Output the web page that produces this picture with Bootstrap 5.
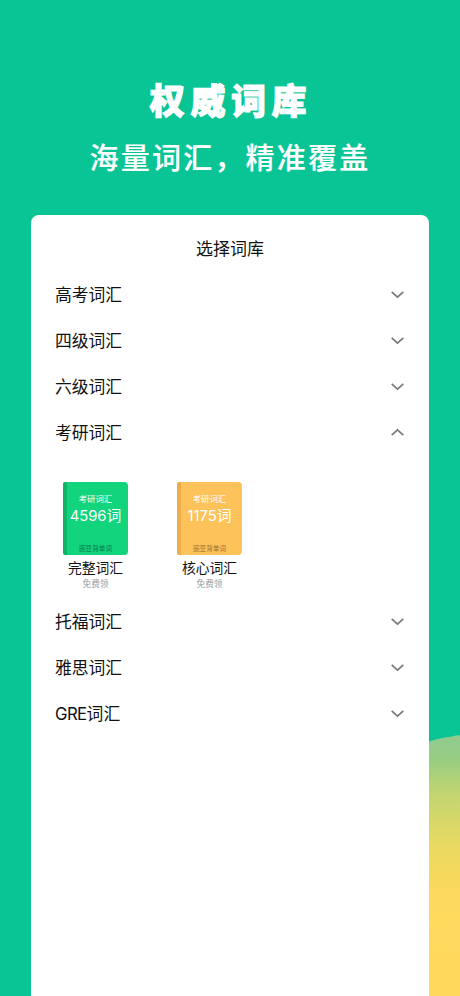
<!DOCTYPE html>
<html lang="zh-CN">
<head>
<meta charset="utf-8">
<meta name="viewport" content="width=device-width, initial-scale=1">
<title>权威词库</title>
<link href="https://cdn.jsdelivr.net/npm/bootstrap@5.3.0/dist/css/bootstrap.min.css" rel="stylesheet">
<style>
body{background:#09c494;font-family:Inter,"Noto Sans CJK SC",sans-serif;color:#111;height:996px}
.stage{height:996px}
.glow{left:380px;top:735px;width:180px;height:420px;border-radius:90px/60px;background:linear-gradient(#8fcb8f 0,#98cd82 25px,#c3d570 60px,#e8da60 110px,#fad95c 150px,#ffda5e 190px,#ffd75b 260px)}
.hero{padding-top:76px;height:215px}
.hero-title{font-size:35px;line-height:50px;font-weight:900;letter-spacing:5.6px;padding-left:2px;-webkit-text-stroke:1.1px #fff}
.hero-sub{font-size:29px;line-height:44px;font-weight:500;letter-spacing:2.2px;margin-top:11px;-webkit-text-stroke:.2px #fff}
.sheet{margin:0 31px;height:781px;border-radius:8px 8px 0 0}
.sheet-title{height:57px;padding-top:11px;font-size:17px}
.bank-row{height:46px;padding:0 24px;font-size:16.8px}
.bank-row span{padding-top:2px}
.bank-row .latin{letter-spacing:-.6px;padding:0}
.bank-row svg{width:13px;height:9px;margin:-1px 1px 0 0}
.books{height:143px;padding:26px 24px 0;gap:33px}
.book-item{width:81px}
.cover{width:65px;height:73px;border-radius:2px 4px 4px 2px;line-height:1}
.cover-green{background:linear-gradient(90deg,#0db567 4px,#11d47c 4px)}
.cover-amber{background:linear-gradient(90deg,#edad4a 4px,#fec25b 4px)}
.cover-kind{font-size:8.4px;margin-top:13px}
.cover-count{font-size:14.8px;margin-top:6px;font-weight:400;white-space:nowrap}
.cover-brand{font-size:6.6px;margin-top:auto;margin-bottom:2px;color:#0b7a4b}
.cover-amber .cover-brand{color:#a0712c}
.book-name{font-size:13.8px;line-height:18px;margin-top:4px}
.book-price{font-size:8.7px;line-height:12px;margin-top:1px;color:#9b9b9b}
</style>
</head>
<body>
<main class="stage position-relative overflow-hidden">
  <div class="glow position-absolute"></div>
  <header class="hero text-center text-white">
    <h1 class="hero-title mb-0">权威词库</h1>
    <p class="hero-sub mb-0 text-nowrap">海量词汇，精准覆盖</p>
  </header>
  <section class="sheet bg-white position-relative">
    <h2 class="sheet-title d-flex align-items-center justify-content-center mb-0 fw-normal">选择词库</h2>
    <div class="bank-row d-flex align-items-center justify-content-between"><span>高考词汇</span><svg viewBox="0 0 13 9" fill="none" stroke="#777" stroke-width="1.6"><path d="M.7 1.8 6.5 7.2 12.3 1.8"/></svg></div>
    <div class="bank-row d-flex align-items-center justify-content-between"><span>四级词汇</span><svg viewBox="0 0 13 9" fill="none" stroke="#777" stroke-width="1.6"><path d="M.7 1.8 6.5 7.2 12.3 1.8"/></svg></div>
    <div class="bank-row d-flex align-items-center justify-content-between"><span>六级词汇</span><svg viewBox="0 0 13 9" fill="none" stroke="#777" stroke-width="1.6"><path d="M.7 1.8 6.5 7.2 12.3 1.8"/></svg></div>
    <div class="bank-row d-flex align-items-center justify-content-between"><span>考研词汇</span><svg viewBox="0 0 13 9" fill="none" stroke="#777" stroke-width="1.6"><path d="M.7 7.2 6.5 1.8 12.3 7.2"/></svg></div>
    <div class="books d-flex">
      <div class="book-item d-flex flex-column align-items-center">
        <div class="cover cover-green d-flex flex-column align-items-center text-white">
          <div class="cover-kind">考研词汇</div><div class="cover-count">4596词</div><div class="cover-brand">豌豆背单词</div>
        </div>
        <div class="book-name">完整词汇</div><div class="book-price">免费领</div>
      </div>
      <div class="book-item d-flex flex-column align-items-center">
        <div class="cover cover-amber d-flex flex-column align-items-center text-white">
          <div class="cover-kind">考研词汇</div><div class="cover-count">1175词</div><div class="cover-brand">豌豆背单词</div>
        </div>
        <div class="book-name">核心词汇</div><div class="book-price">免费领</div>
      </div>
    </div>
    <div class="bank-row d-flex align-items-center justify-content-between"><span>托福词汇</span><svg viewBox="0 0 13 9" fill="none" stroke="#777" stroke-width="1.6"><path d="M.7 1.8 6.5 7.2 12.3 1.8"/></svg></div>
    <div class="bank-row d-flex align-items-center justify-content-between"><span>雅思词汇</span><svg viewBox="0 0 13 9" fill="none" stroke="#777" stroke-width="1.6"><path d="M.7 1.8 6.5 7.2 12.3 1.8"/></svg></div>
    <div class="bank-row d-flex align-items-center justify-content-between"><span><span class="latin">GRE</span>词汇</span><svg viewBox="0 0 13 9" fill="none" stroke="#777" stroke-width="1.6"><path d="M.7 1.8 6.5 7.2 12.3 1.8"/></svg></div>
  </section>
</main>
<script src="https://cdn.jsdelivr.net/npm/bootstrap@5.3.0/dist/js/bootstrap.bundle.min.js"></script>
</body>
</html>
